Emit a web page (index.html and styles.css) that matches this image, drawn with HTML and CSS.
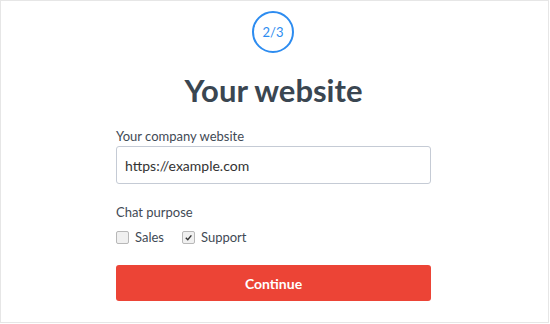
FILE: index.html
```html
<!DOCTYPE html>
<html>
<head>
<meta charset="utf-8">
<link rel="stylesheet" href="styles.css">
</head>
<body>
<div class="frame">
  <div class="step"><span>2/3</span></div>
  <h1 class="title">Your website</h1>
  <form class="form">
    <label class="label" for="site">Your company website</label>
    <input class="input" id="site" type="text" value="https://example.com">
    <div class="label purpose">Chat purpose</div>
    <div class="checks">
      <label class="check"><span class="box"></span>Sales</label>
      <label class="check"><span class="box checked"><svg viewBox="0 0 10 10" width="9" height="9"><path d="M2 5.2 L4.2 7.4 L8.2 2.6" fill="none" stroke="#333" stroke-width="1.6"/></svg></span>Support</label>
    </div>
    <button class="btn" type="button">Continue</button>
  </form>
</div>
</body>
</html>
```

FILE: styles.css
```css
html, body {
  margin: 0;
  padding: 0;
  background: #fff;
}
.frame {
  width: 549px;
  height: 323px;
  box-sizing: border-box;
  border: 1px solid #e6e6e6;
  font-family: Lato, "Noto Sans", sans-serif;
  display: flex;
  flex-direction: column;
  align-items: flex-start;
  padding: 10px 0 0 115px;
}
.step {
  width: 42px;
  height: 42px;
  box-sizing: border-box;
  border: 2px solid #2d8cf0;
  border-radius: 50%;
  display: flex;
  align-items: center;
  justify-content: center;
  color: #2d8cf0;
  font-size: 13px;
  margin-left: 136px;
}
.title {
  margin: 19px 0 0 0;
  width: 315px;
  text-align: center;
  font-size: 31px;
  line-height: 36px;
  font-weight: 700;
  color: #3a4651;
}
.form {
  width: 315px;
  margin-top: 20px;
  display: flex;
  flex-direction: column;
}
.label {
  font-size: 13px;
  line-height: 16px;
  color: #3f4a55;
}
.input {
  margin-top: 2px;
  height: 38px;
  box-sizing: border-box;
  border: 1px solid #c5cbd5;
  border-radius: 3px;
  padding: 0 8px;
  font-family: Lato, "Noto Sans", sans-serif;
  font-size: 14px;
  color: #333;
  outline: none;
}
.purpose {
  margin-top: 20px;
}
.checks {
  display: flex;
  gap: 18px;
  margin-top: 9px;
}
.check {
  display: flex;
  align-items: center;
  gap: 6px;
  font-size: 13px;
  line-height: 16px;
  color: #3f4a55;
}
.box {
  width: 11px;
  height: 11px;
  border: 1px solid #b8b8b8;
  border-radius: 2px;
  background: #f0f0f0;
  display: flex;
  align-items: center;
  justify-content: center;
}
.btn {
  margin-top: 20px;
  height: 36px;
  border: none;
  border-radius: 3px;
  background: #ec4436;
  color: #fff;
  font-family: Lato, "Noto Sans", sans-serif;
  font-size: 14px;
  font-weight: 700;
}
```
